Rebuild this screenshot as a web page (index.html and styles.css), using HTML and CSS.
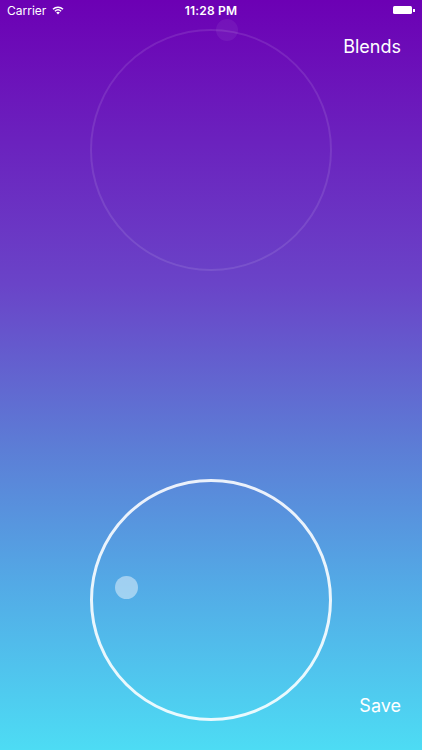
FILE: index.html
```html
<!DOCTYPE html>
<html lang="en">
<head>
  <meta charset="UTF-8">
  <meta name="viewport" content="width=device-width, initial-scale=1.0">
  <title>Blends</title>
  <link rel="stylesheet" href="styles.css">
</head>
<body>
  <div class="screen">
    <div class="status-bar">
      <div class="carrier">
        Carrier
        <svg class="wifi" width="12" height="9" viewBox="0 0 12 9">
          <path d="M6 8.6 L4.2 6.6 A2.6 2.6 0 0 1 7.8 6.6 Z" fill="#fff"/>
          <path d="M2.9 5.2 A4.6 4.6 0 0 1 9.1 5.2" stroke="#fff" stroke-width="1.5" fill="none"/>
          <path d="M1 3.2 A7.2 7.2 0 0 1 11 3.2" stroke="#fff" stroke-width="1.5" fill="none"/>
        </svg>
      </div>
      <div class="clock">11:28 PM</div>
      <div class="battery"><span class="battery-body"></span><span class="battery-tip"></span></div>
    </div>

    <button class="nav-btn blends">Blends</button>

    <div class="dial dial-faded">
      <span class="knob knob-top"></span>
    </div>
    <div class="dial dial-active">
      <span class="knob knob-left"></span>
    </div>

    <button class="nav-btn save">Save</button>
  </div>
</body>
</html>
```

FILE: styles.css
```css
body {
  margin: 0;
  font-family: Inter, "Liberation Sans", Arial, sans-serif;
  background: #4ddcf4;
}

.screen {
  position: relative;
  width: 422px;
  height: 750px;
  overflow: hidden;
  box-sizing: border-box;
  padding-top: 29px;
  display: flex;
  flex-direction: column;
  align-items: center;
  gap: 208px;
  background: linear-gradient(to bottom, #6c00b4 0%, #6a44c8 38%, #5c7ed6 60%, #53aae6 78%, #4ddcf4 100%);
}

/* status bar sits over the content */
.status-bar {
  position: absolute;
  top: 0;
  left: 0;
  right: 0;
  height: 20px;
  display: flex;
  align-items: center;
  justify-content: space-between;
  padding: 0 6px 0 7px;
  color: #fff;
  font-size: 12px;
}

.carrier {
  display: flex;
  align-items: center;
  gap: 6px;
  width: 100px;
}

.clock {
  font-weight: 600;
  letter-spacing: 0.2px;
}

.battery {
  width: 100px;
  display: flex;
  justify-content: flex-end;
  align-items: center;
  margin-right: 1px;
}

.battery-body {
  width: 19px;
  height: 8px;
  background: #fff;
  border-radius: 1.5px;
}

.battery-tip {
  width: 1.5px;
  height: 3px;
  background: #fff;
  margin-left: 1px;
}

.nav-btn {
  position: absolute;
  right: 21px;
  background: none;
  border: none;
  padding: 0;
  color: #fff;
  font-family: inherit;
  font-size: 18px;
  cursor: pointer;
}

.blends {
  top: 36px;
}

.save {
  bottom: 34px;
}

.dial {
  position: relative;
  flex: none;
  width: 242px;
  height: 242px;
  box-sizing: border-box;
  border-radius: 50%;
}

.dial-faded {
  border: 2px solid rgba(255, 255, 255, 0.1);
}

.dial-active {
  border: 3px solid rgba(255, 255, 255, 0.88);
}

.knob {
  position: absolute;
  border-radius: 50%;
}

.knob-top {
  width: 22px;
  height: 22px;
  left: 124px;
  top: -12px;
  background: rgba(255, 255, 255, 0.06);
}

.knob-left {
  width: 23px;
  height: 23px;
  left: 22px;
  top: 94px;
  background: rgba(255, 255, 255, 0.45);
}
```
